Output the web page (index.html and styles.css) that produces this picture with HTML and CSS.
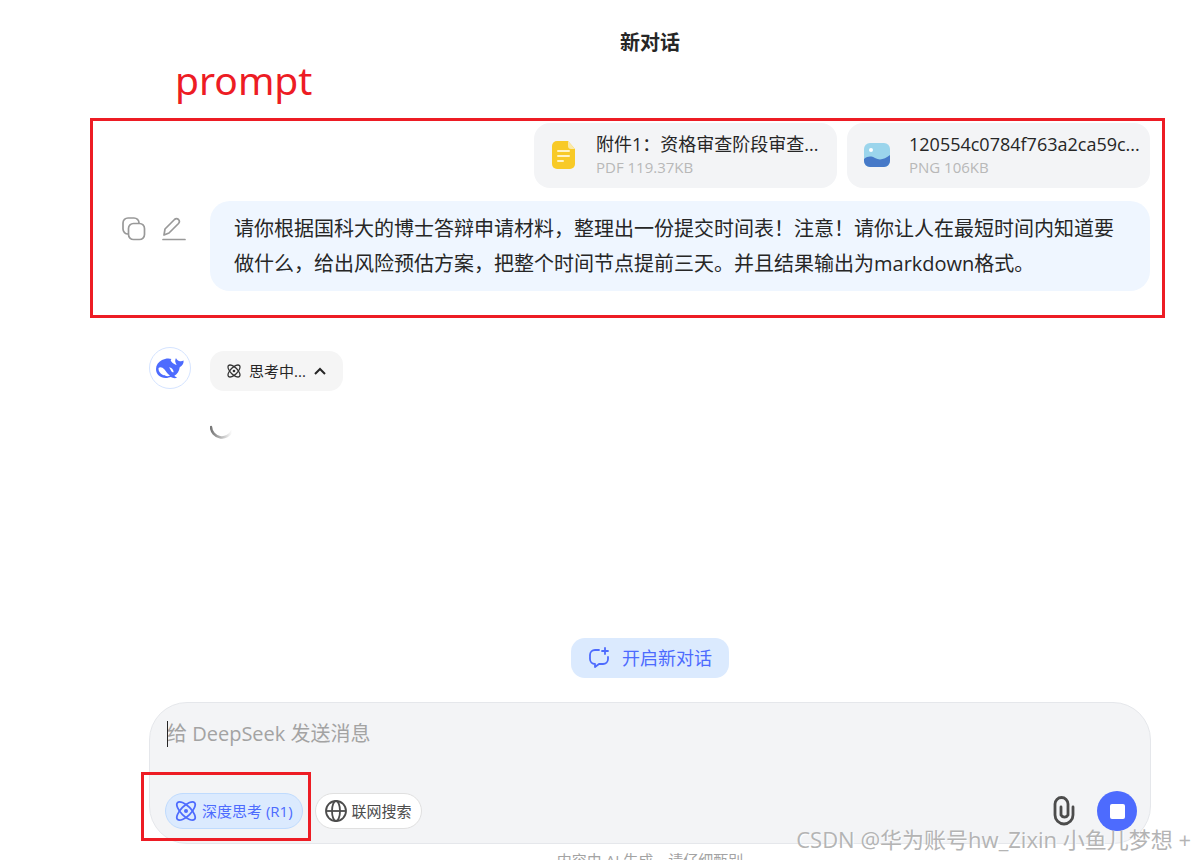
FILE: index.html
```html
<!DOCTYPE html>
<html lang="zh-CN">
  <head>
    <meta charset="utf-8">
    <title>新对话</title>
    <link rel="stylesheet" href="styles.css">
  </head>
  <body>
    <h1 class="title">新对话</h1>
    <div class="chat">
      <div class="files">
        <div class="file">
          <svg class="fileIcon" width="26" height="30" viewBox="0 0 26 30">
            <path d="M6 1h11l7 8v15a5 5 0 0 1-5 5H6a5 5 0 0 1-5-5V6a5 5 0 0 1 5-5z" fill="#f8ca27"/>
            <path d="M17 1l7 8h-4a3 3 0 0 1-3-3z" fill="#fbe9a8"/>
            <path d="M7 11h11M7 16h11M7 21h5" stroke="#fff3c4" stroke-width="2" stroke-linecap="round"/>
          </svg>
          <div class="fileText">
            <div class="fileName">附件1：资格审查阶段审查...</div>
            <div class="fileInfo">PDF 119.37KB</div>
          </div>
        </div>
        <div class="file">
          <svg class="fileIcon" width="26" height="30" viewBox="0 0 26 30">
            <rect y="3" width="26" height="24" rx="6" fill="#9bd5ec"/>
            <path d="M0 19c4-3 7-3 11-1 5 3 10 1 15-3v6a6 6 0 0 1-6 6H6a6 6 0 0 1-6-6z" fill="#4679c8"/>
            <circle cx="7" cy="10" r="2" fill="#fff"/>
          </svg>
          <div class="fileText">
            <div class="fileName">120554c0784f763a2ca59c...</div>
            <div class="fileInfo">PNG 106KB</div>
          </div>
        </div>
      </div>

      <div class="question">
        <div class="actions">
          <button class="iconButton" aria-label="复制">
            <svg width="24" height="24" viewBox="0 0 24 24" fill="none" stroke="#999" stroke-width="1.7">
              <path d="M6 17a5 5 0 0 1-5-5V6a5 5 0 0 1 5-5h6a5 5 0 0 1 5 5"/>
              <rect x="6.500" y="6.500" width="16" height="16" rx="5"/>
            </svg>
          </button>
          <button class="iconButton" aria-label="编辑">
            <svg width="24" height="24" viewBox="0 0 24 24" fill="none" stroke="#999" stroke-width="1.700" stroke-linecap="round" stroke-linejoin="round">
              <path d="M2 18l1-6L12.500 2.500a3 3 0 0 1 4 0 3 3 0 0 1 0 4L7 16z"/>
              <path d="M1 22.500h22"/>
            </svg>
          </button>
        </div>
        <div class="bubble">请你根据国科大的博士答辩申请材料，整理出一份提交时间表！注意！请你让人在最短时间内知道要做什么，给出风险预估方案，把整个时间节点提前三天。并且结果输出为markdown格式。</div>
      </div>

      <div class="answer">
        <div class="avatar">
          <svg width="28" height="22" viewBox="0 0 28 22">
            <path d="M27.600 3.600c-1.500.8-3 .9-4.600.4C21.600 3.500 20.500 2.300 20 1c-.9 1.600-1 3.300-.4 4.800.4 1 .9 1.500.9 2.200-1.800-.4-3.500-1.500-5-3.200C14.200 3.300 14.800 2.500 15.500 2 13 .9 9 1.300 6 3 2.300 5 0 8 0 12c0 5.500 4.200 9 9.500 9 2.400 0 4-.7 5.500-1 1.600 1.200 4.400 1.500 6 .7-.6-.7-2-.8-2.600-1.900 3-1.800 5-5.200 5.300-8.600 2.500-1.100 4.200-3.400 3.900-6.600z" fill="#4d6bfe"/>
            <path d="M2.500 11c1.500-1.400 4-.9 5.800 1.300 2 2.500 3.200 5 5.700 6.200-1.800 1-3.700.8-5.500-.3-.5-.3-.8.200-1.500-.2-3-1.500-4.800-4-4.500-7z" fill="#fff"/>
            <path d="M13 10.500c2-.3 4.400 1.500 4.700 4.700-1 .2-2-.2-2.500-1.200-.5-1-.8-1.800-2.200-3.500z" fill="#fff"/>
          </svg>
        </div>
        <div class="answerBody">
          <button class="thinking">
            <svg width="14" height="14" viewBox="0 0 20 20" fill="none" stroke="#333" stroke-width="1.800">
              <ellipse cx="10" cy="10" rx="5" ry="11" transform="rotate(45 10 10)"/>
              <ellipse cx="10" cy="10" rx="5" ry="11" transform="rotate(-45 10 10)"/>
              <circle cx="10" cy="10" r="1"/>
            </svg>
            <span>思考中...</span>
            <svg width="12" height="8" viewBox="0 0 12 8" fill="none" stroke="#262626" stroke-width="2"><path d="M1 7l5-5 5 5"/></svg>
          </button>
          <svg class="spinner" width="24" height="14" viewBox="0 0 24 14" fill="none">
            <defs>
              <linearGradient id="fade"><stop offset="0" stop-color="#777"/><stop offset="1" stop-color="#fff"/></linearGradient>
            </defs>
            <path d="M1 2a11 11 0 0 0 21 4" stroke="url(#fade)" stroke-width="2.500" stroke-linecap="round"/>
          </svg>
        </div>
      </div>
    </div>

    <button class="newChat">
      <svg width="22" height="22" viewBox="0 0 22 22" fill="none" stroke="#4d6bfe" stroke-width="1.800" stroke-linecap="round" stroke-linejoin="round">
        <path d="M11 3H7a5 5 0 0 0-5 5v4a5 5 0 0 0 5 5v3l4-3h4a5 5 0 0 0 5-5v-2"/>
        <path d="M17 1v6M14 4h6"/>
      </svg>
      <span>开启新对话</span>
    </button>

    <div class="composer">
      <div class="inputArea">
        <textarea class="input" rows="1" aria-label="给 DeepSeek 发送消息" placeholder="给 DeepSeek 发送消息"></textarea>
      </div>
      <div class="tools">
        <button class="pill active">
          <svg width="22" height="22" viewBox="0 0 22 22" fill="none" stroke="#4d6bfe" stroke-width="1.800">
            <ellipse cx="11" cy="11" rx="5" ry="12" transform="rotate(45 11 11)"/>
            <ellipse cx="11" cy="11" rx="5" ry="12" transform="rotate(-45 11 11)"/>
            <circle cx="11" cy="11" r="2" fill="#4d6bfe" stroke="none"/>
          </svg>
          <span>深度思考 (R1)</span>
        </button>
        <button class="pill">
          <svg width="22" height="22" viewBox="0 0 22 22" fill="none" stroke="#4c4c4c" stroke-width="1.800">
            <circle cx="11" cy="11" r="10"/>
            <ellipse cx="11" cy="11" rx="4" ry="10"/>
            <path d="M1 11h20"/>
          </svg>
          <span>联网搜索</span>
        </button>
        <button class="iconButton attach" aria-label="上传附件">
          <svg width="22" height="30" viewBox="0 0 22 30" fill="none" stroke="#4c4c4c" stroke-width="2.800" stroke-linecap="round">
            <path d="M20 11v8a9 9 0 0 1-18 0V8a6.500 6.500 0 0 1 13 0v11a4 4 0 0 1-7 0v-8"/>
          </svg>
        </button>
        <button class="stop" aria-label="停止"></button>
      </div>
    </div>
    <p class="disclaimer">内容由 AI 生成，请仔细甄别</p>

    <div class="note">prompt</div>
    <div class="mark markPrompt"></div>
    <div class="mark markThink"></div>
    <div class="watermark">CSDN @华为账号hw_Zixin 小鱼儿梦想 +</div>
  </body>
</html>
```
FILE: styles.css
```css
* {
  box-sizing: border-box;
}

body {
  position: relative;
  display: flex;
  flex-direction: column;
  height: 100vh;
  margin: 0;
  padding: 0 48px 0 149px;
  overflow: hidden;
  background-color: #ffffff;
  color: #262626;
  font-family: "Open Sans", "Noto Sans CJK SC", sans-serif;
  font-weight: 400;
}

button {
  padding: 0;
  border: none;
  background: none;
  font-family: inherit;
  font-weight: inherit;
  cursor: pointer;
}

button span {
  padding-bottom: 2px;
}

svg {
  display: block;
  flex: none;
}

.title {
  margin: 29px 0 66px;
  text-align: center;
  font-size: 20px;
  font-weight: 700;
  line-height: 28px;
}

.chat {
  flex: 1;
  padding-right: 1px;
}

.files {
  display: flex;
  justify-content: flex-end;
  gap: 10px;
  margin-bottom: 13px;
}

.file {
  display: flex;
  align-items: center;
  gap: 19px;
  width: 303px;
  height: 65px;
  padding: 0 8px 2px 17px;
  border-radius: 16px;
  background-color: #f3f4f6;
}

.fileText {
  white-space: nowrap;
}

.fileName {
  font-size: 18px;
  line-height: 24px;
}

.fileInfo {
  color: #b8b8b8;
  font-size: 15px;
  line-height: 22px;
}

.question {
  display: flex;
  margin-left: -27px;
}

.actions {
  display: flex;
  gap: 16px;
  width: 88px;
  padding-top: 16px;
}

.iconButton {
  height: 24px;
}

.bubble {
  flex: 1;
  padding: 10px 24px;
  border-radius: 20px;
  background-color: #eff6ff;
  font-size: 20px;
  line-height: 35px;
}

.answer {
  display: flex;
  gap: 19px;
  margin-top: 56px;
}

.avatar {
  display: flex;
  align-items: center;
  justify-content: center;
  width: 42px;
  height: 42px;
  border: 1px solid #d5e4ff;
  border-radius: 50%;
}

.answerBody {
  padding-top: 4px;
}

.thinking {
  display: flex;
  align-items: center;
  gap: 8px;
  height: 40px;
  padding: 0 17px;
  border-radius: 14px;
  background-color: #f5f5f5;
  color: #262626;
  font-size: 15px;
}

.spinner {
  margin-top: 34px;
}

.newChat {
  display: flex;
  align-items: center;
  align-self: center;
  gap: 12px;
  height: 40px;
  margin-bottom: 24px;
  padding: 0 17px;
  border-radius: 14px;
  background-color: #dbeafe;
  color: #4d6bfe;
  font-size: 18px;
}

.composer {
  height: 142px;
  padding: 15px 13px 12px 15px;
  border: 1px solid #e5e7eb;
  border-radius: 38px;
  background-color: #f3f4f6;
}

.inputArea {
  position: relative;
  height: 73px;
}

/* text cursor */
.inputArea::before {
  content: "";
  position: absolute;
  top: 3px;
  left: 2px;
  width: 1px;
  height: 26px;
  background-color: #262626;
}

.input {
  display: block;
  width: 100%;
  height: 32px;
  padding: 0 2px;
  border: none;
  outline: none;
  resize: none;
  background: none;
  font-family: inherit;
  font-size: 20px;
  font-weight: inherit;
  line-height: 32px;
}

.input::placeholder {
  color: #a3a3a3;
}

.tools {
  display: flex;
  align-items: center;
  height: 40px;
}

.pill {
  display: flex;
  align-items: center;
  gap: 5px;
  height: 36px;
  margin-right: 12px;
  padding: 0 9px;
  border: 1px solid #e0e0e0;
  border-radius: 18px;
  background-color: #ffffff;
  color: #4c4c4c;
  font-size: 15px;
}

.pill.active {
  border-color: #bfdbfe;
  background-color: #dbeafe;
  color: #4d6bfe;
}

.attach {
  height: 30px;
  margin-left: auto;
  margin-right: 22px;
}

.stop {
  display: flex;
  align-items: center;
  justify-content: center;
  width: 40px;
  height: 40px;
  border-radius: 50%;
  background-color: #4d6bfe;
}

.stop::before {
  content: "";
  width: 15px;
  height: 15px;
  border-radius: 2px;
  background-color: #ffffff;
}

.disclaimer {
  margin: 6px 0 -10px;
  color: #a3a3a3;
  text-align: center;
  font-size: 15px;
  line-height: 20px;
}

/* Red notes drawn over the page */
.note {
  position: absolute;
  top: 54px;
  left: 175px;
  color: #ed1c24;
  font-family: "Noto Sans", sans-serif;
  font-size: 39px;
  line-height: 52px;
}

.mark {
  position: absolute;
  border: 3px solid #ed1c24;
}

.markPrompt {
  top: 118px;
  left: 90px;
  right: 34px;
  height: 200px;
}

.markThink {
  bottom: 19px;
  left: 141px;
  width: 170px;
  height: 69px;
}

.watermark {
  position: absolute;
  right: 8px;
  bottom: 5px;
  color: #b4b4b4;
  font-size: 22px;
  line-height: 32px;
  text-shadow: 1px 1px 1px #ffffff;
  white-space: nowrap;
}
```
